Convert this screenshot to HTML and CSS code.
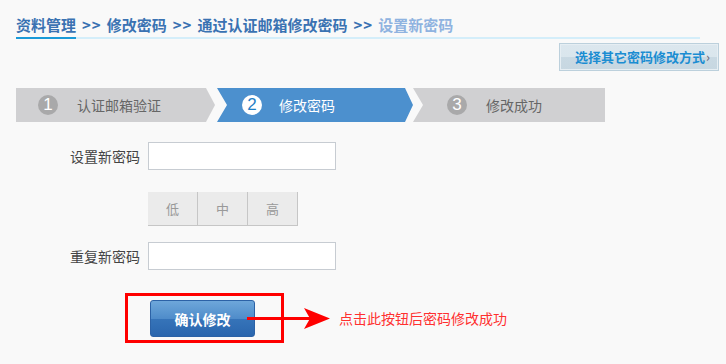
FILE: index.html
```html
<!DOCTYPE html>
<html lang="zh-CN">
<head>
    <meta charset="UTF-8">
    <title>设置新密码</title>
    <link rel="stylesheet" href="styles.css">
</head>
<body>
    <div class="page">
        <!-- 面包屑 -->
        <div class="crumb">
            <span class="crumb-first">资料管理</span><span class="sep">&gt;&gt;</span><span>修改密码</span><span class="sep">&gt;&gt;</span><span>通过认证邮箱修改密码</span><span class="sep">&gt;&gt;</span><span class="crumb-cur">设置新密码</span>
        </div>

        <div class="other-row">
            <a class="other-btn" href="#">选择其它密码修改方式<span class="gt">›</span></a>
        </div>

        <!-- 步骤 -->
        <div class="steps">
            <div class="step step-1"><span class="num">1</span>认证邮箱验证</div>
            <div class="step step-2 active"><span class="num">2</span>修改密码</div>
            <div class="step step-3"><span class="num">3</span>修改成功</div>
        </div>

        <div class="form">
            <div class="row">
                <label for="pwd">设置新密码</label>
                <input type="password" id="pwd">
            </div>
            <div class="row row-strength">
                <span class="label"></span>
                <div class="strength">
                    <span>低</span><span>中</span><span>高</span>
                </div>
            </div>
            <div class="row row-repeat">
                <label for="pwd2">重复新密码</label>
                <input type="password" id="pwd2">
            </div>
            <div class="action">
                <div class="mark">
                    <button class="btn-ok">确认修改</button>
                </div>
                <span class="note">点击此按钮后密码修改成功</span>
                <svg class="arrow" width="90" height="24" viewBox="0 0 90 24">
                    <rect x="0" y="9" width="70" height="3" fill="#ff0000"/>
                    <path d="M57 0 L83 10.5 L57 21 L63 10.5 Z" fill="#ff0000"/>
                </svg>
            </div>
        </div>
    </div>
</body>
</html>
```

FILE: styles.css
```css
body {
    margin: 0;
    padding: 0;
    background-color: #f9f9f9;
    font-family: "Noto Sans CJK SC", "Liberation Sans", sans-serif;
    font-size: 14px;
    color: #555;
}

.page {
    padding-left: 16px;
    width: 710px;
}

.crumb {
    width: 684px;
    padding-top: 15px;
    line-height: 20px;
    font-size: 15px;
    font-weight: bold;
    color: #3a72b2;
    border-bottom: 2px solid #d4eefa;
    white-space: nowrap;
}

.crumb span {
    display: inline-block;
}

.crumb-first {
    border-bottom: 2px solid #1a9ad8;
    margin-bottom: -2px;
    padding-bottom: 2px;
}

.crumb .sep {
    margin: 0 5px 0 6px;
    letter-spacing: 1px;
}

.crumb-cur {
    color: #8fb3e0;
}

.other-row {
    display: flex;
    justify-content: flex-end;
    margin-top: 4px;
    padding-right: 7px;
}

.other-btn {
    display: block;
    width: 143px;
    height: 26px;
    line-height: 26px;
    box-sizing: content-box;
    border: 1px solid #bcd0dc;
    box-shadow: inset 0 0 0 1px #e6eef3;
    background: linear-gradient(#dce7ee, #dae6ed 50%, #c9d9e3 50%, #c7d7e1);
    color: #1b8dd2;
    font-size: 13px;
    font-weight: bold;
    text-decoration: none;
    text-align: left;
    padding-left: 15px;
    white-space: nowrap;
}

.other-btn .gt {
    color: #667;
    font-weight: normal;
    margin-left: 1px;
}

.steps {
    display: flex;
    margin-top: 17px;
    height: 34px;
}

.step {
    display: flex;
    align-items: center;
    height: 34px;
    background-color: #d0d0d2;
    color: #666;
    font-size: 14px;
    box-sizing: border-box;
}

.step .num {
    width: 20px;
    height: 20px;
    line-height: 20px;
    border-radius: 50%;
    background-color: #a9a9aa;
    color: #fff;
    font-family: "Liberation Sans", sans-serif;
    font-size: 17px;
    text-align: center;
    margin-right: 19px;
}

.step-1 {
    width: 199px;
    padding-left: 22px;
    clip-path: polygon(0 0, calc(100% - 9px) 0, 100% 50%, calc(100% - 9px) 100%, 0 100%);
}

.step-2 {
    width: 196px;
    margin-left: 2px;
    padding-left: 25px;
    clip-path: polygon(0 0, calc(100% - 8px) 0, 100% 50%, calc(100% - 8px) 100%, 0 100%, 10px 50%);
}

.step-3 {
    width: 192px;
    padding-left: 34px;
    clip-path: polygon(0 0, 100% 0, 100% 100%, 0 100%, 10px 50%);
}

.step.active {
    background-color: #4c90ce;
    color: #fff;
}

.step.active .num {
    background-color: #fff;
    color: #1f7fc6;
    margin-right: 17px;
}

.form {
    margin-top: 20px;
}

.row {
    display: flex;
    align-items: center;
}

.row label,
.row .label {
    width: 124px;
    margin-right: 8px;
    text-align: right;
    color: #444;
}

.row input {
    width: 188px;
    height: 28px;
    box-sizing: border-box;
    border: 1px solid #c7ccd2;
    background: #fff;
    margin: 0;
    padding: 0 4px;
}

.row-strength {
    margin-top: 22px;
}

.strength {
    display: flex;
    width: 150px;
    height: 34px;
    background-color: #ebebeb;
    border-bottom: 1px solid #c6c6c6;
    box-sizing: border-box;
}

.strength span {
    flex: 1;
    line-height: 33px;
    text-align: center;
    color: #999;
    font-size: 13px;
    border-right: 1px solid #c6c6c6;
}

.row-repeat {
    margin-top: 16px;
}

.action {
    position: relative;
    display: flex;
    align-items: center;
    margin-top: 23px;
    margin-left: 109px;
}

.mark {
    border: 3px solid #ff0000;
    padding: 4px 0 0 22px;
    box-sizing: content-box;
    width: 131px;
    height: 40px;
}

.btn-ok {
    width: 105px;
    height: 37px;
    border: 1px solid #2c62a6;
    border-radius: 3px;
    background: linear-gradient(#6ea7da, #4f8cca 50%, #3674b9 51%, #2a66ae);
    color: #fff;
    font-family: "Noto Sans CJK SC", sans-serif;
    font-size: 14px;
    font-weight: bold;
    padding: 0;
    cursor: pointer;
}

.note {
    margin-left: 55px;
    color: #ff3030;
    font-size: 14px;
}

.arrow {
    position: absolute;
    left: 122px;
    top: 15px;
}
```
